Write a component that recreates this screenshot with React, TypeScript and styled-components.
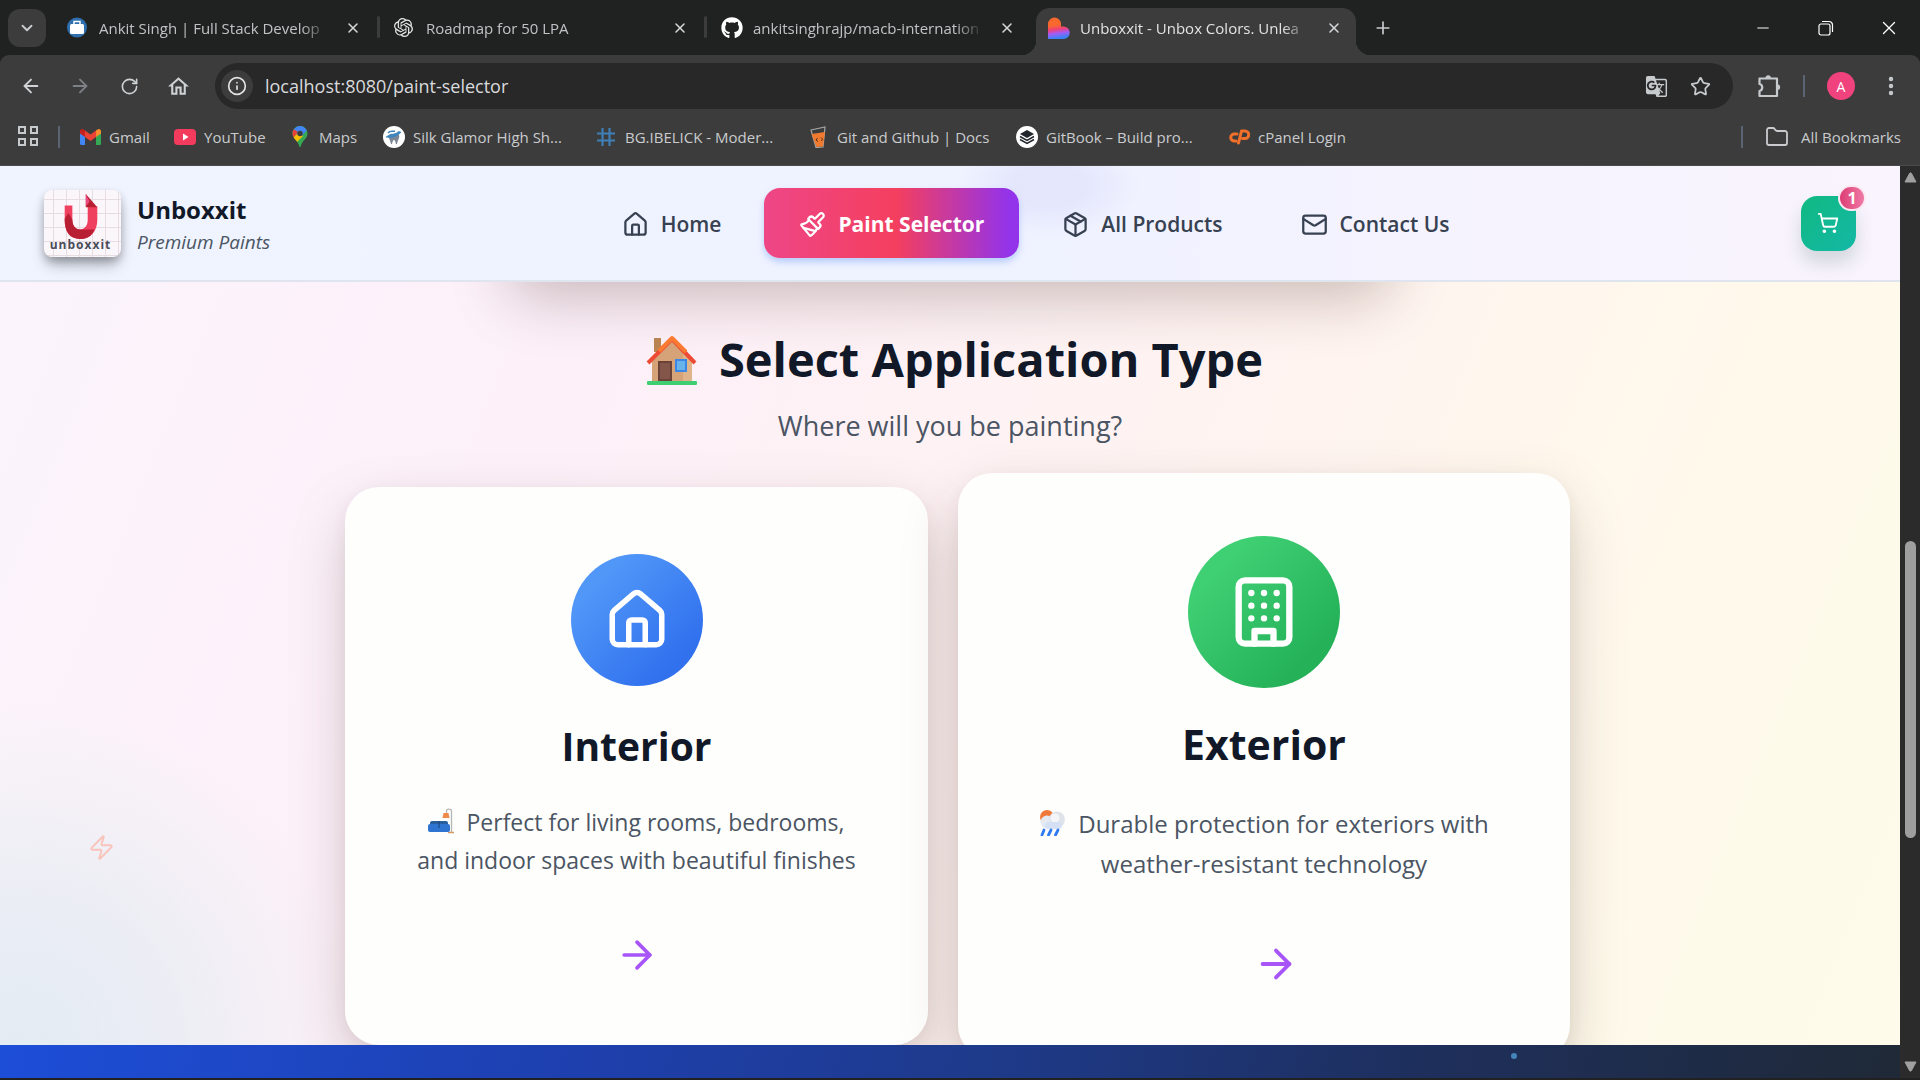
import React from "react";
import styled, { createGlobalStyle, css } from "styled-components";
import {
  ArrowLeft, ArrowRight, RotateCw, Info, X, Plus, Minus, ChevronDown, Star, Folder,
  House, Paintbrush, Package, Mail, ShoppingCart, Zap, EllipsisVertical,
} from "lucide-react";
import { FaGithub } from "react-icons/fa";
import { SiOpenai } from "react-icons/si";
import { MdGTranslate, MdOutlineHome } from "react-icons/md";

const Global = createGlobalStyle`
  * { box-sizing: border-box; }
  html, body, #root { height: 100%; }
  body { margin: 0; background: #202221; font-family: "Open Sans", "Noto Sans", sans-serif; overflow: hidden; }
  button { font: inherit; color: inherit; background: none; border: 0; padding: 0; cursor: pointer; }
  a { color: inherit; text-decoration: none; }
  h1, h2, p { margin: 0; }
  svg { flex: none; display: block; }
`;

const Browser = styled.div`
  height: 100vh;
  display: flex;
  flex-direction: column;
  padding-bottom: 2px;
  background: #222121;
`;

/* ---------- tab strip ---------- */
const TabStrip = styled.div`
  flex: none;
  height: 55px;
  display: flex;
  align-items: flex-end;
  padding-left: 8px;
  background: #202221;
  color: #c9cccf;
`;
const TabSearch = styled.button`
  width: 38px;
  height: 38px;
  margin: 0 9px 8px 0;
  border-radius: 12px;
  background: #3c3c3c;
  display: grid;
  place-items: center;
`;
const Tab = styled.div<{ $active?: boolean }>`
  position: relative;
  width: 320px;
  height: 47px;
  margin-right: 7px;
  padding: 0 14px 8px 12px;
  display: flex;
  align-items: center;
  gap: 10px;
  font-size: 15px;
  color: ${(p) => (p.$active ? "#e3e3e3" : "#c0c3c6")};
  ${(p) =>
    p.$active
      ? css`
          background: #3c3c3c;
          border-radius: 14px 14px 0 0;
          &::before, &::after {
            content: "";
            position: absolute;
            bottom: 0;
            width: 14px;
            height: 14px;
          }
          &::before { left: -14px; background: radial-gradient(circle at 0 0, transparent 14px, #3c3c3c 14px); }
          &::after { right: -14px; background: radial-gradient(circle at 100% 0, transparent 14px, #3c3c3c 14px); }
        `
      : ""}
`;
const TabSlot = styled.span`
  width: 22px;
  display: grid;
  place-items: center start;
  flex: none;
`;
const TabLabel = styled.span`
  flex: 1;
  min-width: 0;
  margin-right: 6px;
  overflow: hidden;
  white-space: nowrap;
  mask-image: linear-gradient(90deg, #000 88%, transparent);
`;
const TabClose = styled.button`
  width: 16px;
  height: 16px;
  display: grid;
  place-items: center;
  color: #d4d6d8;
`;
const TabDivider = styled.i`
  position: absolute;
  right: -5px;
  top: 8px;
  width: 3px;
  height: 22px;
  border-radius: 2px;
  background: #3c3c3c;
`;
const NewTab = styled.button`
  width: 38px;
  height: 38px;
  margin: 0 0 8px 1px;
  display: grid;
  place-items: center;
`;
const WindowControls = styled.div`
  margin-left: auto;
  height: 54px;
  display: flex;
  color: #fff;
  button { width: 63px; display: grid; place-items: center; }
`;

/* ---------- toolbar ---------- */
const Toolbar = styled.div`
  flex: none;
  height: 54px;
  padding: 8px 17px 0 19px;
  display: flex;
  align-items: center;
  border-radius: 9px 9px 0 0;
  background: #3c3c3c;
  color: #c7cacd;
`;
const ToolButton = styled.button<{ $dim?: boolean }>`
  width: 24px;
  height: 24px;
  margin-right: 25px;
  display: grid;
  place-items: center;
  color: ${(p) => (p.$dim ? "#7d8085" : "#d0d3d6")};
`;
const Omnibox = styled.div`
  flex: 1;
  height: 46px;
  padding: 0 22px 0 6px;
  border-radius: 23px;
  display: flex;
  align-items: center;
  gap: 22px;
  background: #282828;
`;
const SiteInfo = styled.button`
  width: 32px;
  height: 32px;
  border-radius: 50%;
  background: #3c3c3c;
  color: #e3e3e3;
  display: grid;
  place-items: center;
`;
const Url = styled.input`
  flex: 1;
  min-width: 0;
  margin-left: -10px;
  padding: 0;
  border: 0;
  outline: 0;
  background: none;
  color: #d8dadd;
  font: 18px "Open Sans", "Noto Sans", sans-serif;
`;
const ToolbarEnd = styled.div`
  display: flex;
  align-items: center;
  padding-left: 24px;
`;
const Divider = styled.i<{ $gap: number }>`
  width: 2px;
  height: 22px;
  margin: 0 ${(p) => p.$gap}px;
  background: #5a6472;
`;
const Avatar = styled.button`
  width: 28px;
  height: 28px;
  margin-right: 24px;
  border-radius: 50%;
  background: #f0427c;
  color: #fff;
  font-size: 14px;
`;

/* ---------- bookmarks ---------- */
const Bookmarks = styled.nav`
  flex: none;
  height: 57px;
  padding: 0 19px 1px 18px;
  display: flex;
  align-items: center;
  background: #3c3c3c;
  border-bottom: 1px solid #4a4a4a;
  color: #c9cbce;
  font-size: 15px;
`;
const Bookmark = styled.a<{ $width: number }>`
  width: ${(p) => p.$width}px;
  flex: none;
  display: flex;
  align-items: center;
  gap: 8px;
  white-space: nowrap;
`;
const BookmarkIcon = styled.span`
  width: 22px;
  height: 22px;
  display: grid;
  place-items: center;
`;
const AllBookmarks = styled.button`
  display: flex;
  align-items: center;
  gap: 12px;
  white-space: nowrap;
`;
const Spacer = styled.span`flex: 1;`;

/* ---------- page viewport ---------- */
const Viewport = styled.div`
  flex: 1;
  min-height: 0;
  display: flex;
`;
const Page = styled.div`
  flex: 1;
  min-width: 0;
  display: flex;
  flex-direction: column;
  overflow: hidden;
`;
const Scrollbar = styled.div`
  width: 20px;
  flex: none;
  display: flex;
  flex-direction: column;
  align-items: center;
  padding: 6px 0;
  background: #2b2b2b;
`;
const Track = styled.div`
  flex: 1;
  display: grid;
  grid-template-rows: 358fr 298fr 223fr;
`;
const Thumb = styled.i`
  grid-row: 2;
  width: 11px;
  border-radius: 6px;
  background: #9f9f9f;
`;

const Header = styled.header`
  flex: none;
  z-index: 2;
  height: 116px;
  padding: 0 44px;
  display: flex;
  justify-content: space-between;
  align-items: center;
  border-bottom: 2px solid #dfe5ee;
  background:
    radial-gradient(ellipse 90px 50px at 1050px 20px, rgba(224, 226, 252, 0.7) 40%, transparent 100%),
    linear-gradient(90deg, #eff4ff 0%, #eff2ff 55%, #f6f3fe 80%, #f9f4fd 100%);
`;
const Brand = styled.a`
  display: flex;
  align-items: center;
  gap: 16px;
`;
const Logo = styled.span`
  width: 77px;
  height: 67px;
  padding: 2px 4px 0 0;
  border-radius: 8px;
  overflow: hidden;
  background-color: #fbf6fa;
  background-image: linear-gradient(#e6dce2 1px, transparent 1px), linear-gradient(90deg, #e6dce2 1px, transparent 1px);
  background-size: 13px 14px;
  background-position: 9px 9px;
  display: flex;
  flex-direction: column;
  align-items: center;
  box-shadow: 0 10px 15px -3px rgba(0, 0, 0, 0.3), 0 4px 8px rgba(0, 0, 0, 0.2);
`;
const LogoText = styled.span`
  margin-top: -1px;
  font-size: 12px;
  line-height: 14px;
  font-weight: 700;
  letter-spacing: 1px;
  color: #4a4c58;
`;
const BrandText = styled.span`
  display: flex;
  flex-direction: column;
  padding-top: 6px;
  strong { font-size: 24px; line-height: 32px; color: #111827; }
  em { font-size: 19px; line-height: 32px; color: #4b5563; }
`;
const Nav = styled.nav`
  display: flex;
  align-items: center;
  gap: 8px;
`;
const NavLink = styled.a<{ $active?: boolean }>`
  height: 70px;
  padding: 2px 35px 0;
  display: flex;
  align-items: center;
  gap: 12px;
  border-radius: 16px;
  font-size: 21px;
  font-weight: ${(p) => (p.$active ? 700 : 600)};
  white-space: nowrap;
  color: ${(p) => (p.$active ? "#fff" : "#374151")};
  ${(p) =>
    p.$active
      ? css`
          background: linear-gradient(90deg, #ee4687 0%, #f43f5e 52%, #9333ea 96%);
          box-shadow: 0 4px 6px rgba(147, 180, 250, 0.6);
        `
      : ""}
`;
const CartButton = styled.button`
  position: relative;
  width: 55px;
  height: 55px;
  border-radius: 16px;
  display: grid;
  place-items: center;
  color: #fff;
  background: linear-gradient(135deg, #10b981, #14b8a6);
  box-shadow: 0 12px 18px rgba(60, 100, 90, 0.2);
`;
const CartCount = styled.span`
  position: absolute;
  top: -11px;
  right: -10px;
  width: 28px;
  height: 26px;
  border: 2px solid #fbe9f1;
  border-radius: 13px;
  background: linear-gradient(90deg, #dc3d73, #f07aa6);
  font-size: 16px;
  line-height: 22px;
  font-weight: 700;
`;

const Content = styled.main`
  flex: 1;
  min-height: 0;
  overflow: hidden;
  position: relative;
  display: flex;
  flex-direction: column;
  align-items: center;
  background:
    radial-gradient(circle 340px at 20px 100%, rgba(214, 232, 240, 0.65) 0%, rgba(222, 234, 240, 0.55) 45%, rgba(236, 240, 242, 0.35) 80%, transparent 100%),
    linear-gradient(112deg, #fbf4fc 0%, #fdf0f9 26%, #fef2f4 46%, #fff4f0 62%, #fff8ec 76%, #fefaea 90%, #fefbea 100%);
`;
const PreviousPanel = styled.div`
  flex: none;
  width: 900px;
  height: 120px;
  margin-top: -124px;
  border-radius: 32px;
  box-shadow: 0 28px 60px -10px rgba(60, 35, 25, 0.28);
`;
const SectionTitle = styled.h1`
  margin: 48px 0 0 9px;
  display: flex;
  align-items: center;
  gap: 22px;
  font-size: 47px;
  line-height: 66px;
  font-weight: 700;
  color: #111827;
`;
const SectionLead = styled.p`
  margin-top: 15px;
  font-size: 27px;
  line-height: 38px;
  color: #4b5563;
`;
const Cards = styled.div`
  margin-top: 28px;
  margin-left: 15px;
  display: flex;
  align-items: center;
  gap: 30px;
`;
const Card = styled.button<{ $large?: boolean }>`
  flex: none;
  width: ${(p) => (p.$large ? 612 : 583)}px;
  height: ${(p) => (p.$large ? 586 : 558)}px;
  padding-top: ${(p) => (p.$large ? 63 : 67)}px;
  border-radius: 34px;
  background: #fefefd;
  box-shadow: 0 24px 60px -6px rgba(70, 45, 35, 0.26), 0 4px 16px rgba(70, 45, 35, 0.05);
  display: flex;
  flex-direction: column;
  align-items: center;
`;
const Disc = styled.span<{ $large?: boolean; $from: string; $to: string }>`
  width: ${(p) => (p.$large ? 152 : 132)}px;
  height: ${(p) => (p.$large ? 152 : 132)}px;
  border-radius: 50%;
  display: grid;
  place-items: center;
  color: #fff;
  background: linear-gradient(135deg, ${(p) => p.$from} 20%, ${(p) => p.$to} 80%);
`;
const CardTitle = styled.strong<{ $large?: boolean }>`
  margin-top: ${(p) => (p.$large ? 26 : 30)}px;
  font-size: ${(p) => (p.$large ? 41 : 39)}px;
  line-height: 60px;
  color: #111827;
`;
const CardText = styled.span<{ $large?: boolean }>`
  margin-top: ${(p) => (p.$large ? 30 : 27)}px;
  font-size: ${(p) => (p.$large ? 24 : 23)}px;
  line-height: ${(p) => (p.$large ? 40 : 38)}px;
  color: #4b5563;
  white-space: nowrap;
  svg { display: inline-block; margin-right: 12px; vertical-align: -3px; }
`;
const CardArrow = styled.span<{ $large?: boolean }>`
  margin-top: ${(p) => (p.$large ? 57 : 54)}px;
  padding-left: ${(p) => (p.$large ? 24 : 0)}px;
  color: #a855f7;
`;
const Spark = styled.span`
  position: absolute;
  left: 88px;
  top: 552px;
  color: #f8c4bb;
`;
const Footer = styled.footer`
  flex: none;
  z-index: 1;
  height: 33px;
  padding: 8px 383px 0 0;
  display: flex;
  justify-content: flex-end;
  background: linear-gradient(100deg, #1d4ed8 0%, #1e40af 30%, #1e3a8a 52%, #1e2f5c 75%, #1f2937 100%);
`;
const FooterDot = styled.i`
  width: 6px;
  height: 6px;
  border-radius: 50%;
  background: #4285b8;
`;

/* ---------- drawings ---------- */
const BagIcon = () => (
  <svg width="20" height="21" viewBox="0 0 20 21">
    <circle cx="10" cy="10.500" r="10" fill="#2f6fae" />
    <rect x="3" y="7" width="14" height="10" rx="1.500" fill="#fff" />
    <path d="M7 7V4.500h6V7" fill="none" stroke="#fff" strokeWidth="1.500" />
  </svg>
);
const HeartIcon = () => (
  <svg width="22" height="22" viewBox="0 0 22 22">
    <defs>
      <linearGradient id="heart" x1="0" y1="0" x2="0.150" y2="1">
        <stop offset="0.400" stopColor="#f9692d" />
        <stop offset="0.600" stopColor="#ee3f7c" />
        <stop offset="0.780" stopColor="#a45cf5" />
        <stop offset="1" stopColor="#3b82f6" />
      </linearGradient>
    </defs>
    <path d="M0 22V7a6.500 6.500 0 0 1 13 0v2.500h2.500a6.200 6.200 0 0 1 0 12.500z" fill="url(#heart)" />
  </svg>
);
const RestoreIcon = () => (
  <svg width="16" height="16" viewBox="0 0 16 16" fill="none" stroke="#fff" strokeWidth="1.200">
    <rect x="1" y="4" width="11" height="11" rx="2" />
    <path d="M4 1.500h7A3.500 3.500 0 0 1 14.500 5v7" />
  </svg>
);
const PuzzleIcon = () => (
  <svg width="24" height="24" viewBox="0 0 24 24">
    <path d="M2.500 4.500H20V22H2.500v-5a3.600 3.600 0 0 0 0-7z" fill="none" stroke="#c7cacd" strokeWidth="2.200" strokeLinejoin="round" />
    <path d="M8.500 4a2.700 2.700 0 0 1 5.400 0zM20.500 10.500a2.700 2.700 0 0 1 0 5.400z" fill="#c7cacd" />
  </svg>
);
const GridIcon = () => (
  <svg width="21" height="21" viewBox="0 0 21 21" fill="none" stroke="#c7cacd" strokeWidth="2">
    <rect x="1" y="1" width="6" height="6" /><rect x="13" y="1" width="6" height="6" />
    <rect x="1" y="13" width="6" height="6" /><rect x="13" y="13" width="6" height="6" />
  </svg>
);
const GmailIcon = () => (
  <svg width="21" height="16" viewBox="0 0 21 16">
    <path d="M0 3v11.500A1.500 1.500 0 0 0 1.500 16H5V7z" fill="#4285f4" />
    <path d="M21 3v11.500a1.500 1.500 0 0 1-1.500 1.500H16V7z" fill="#34a853" />
    <path d="M5 1.500V8l5.500 4L16 8V1.500l-5.500 4z" fill="#ea4335" />
    <path d="M0 2.500v2L5 8V1.500L3.500.5A2.200 2.200 0 0 0 0 2.500z" fill="#c5221f" />
    <path d="M21 2.500v2L16 8V1.500l1.500-1A2.200 2.200 0 0 1 21 2.500z" fill="#fb8c2c" />
  </svg>
);
const YouTubeIcon = () => (
  <svg width="22" height="16" viewBox="0 0 22 16">
    <rect width="22" height="16" rx="4" fill="#f23b5d" /><path d="M9 4.500v7l5.500-3.500z" fill="#fff" />
  </svg>
);
const MapsIcon = () => (
  <svg width="16" height="21" viewBox="0 0 16 21">
    <defs><clipPath id="pin"><path d="M8 0a7.500 7.500 0 0 1 7.500 7.500C15.500 13 10 14 8.500 21h-1C6 14 .5 13 .5 7.500A7.500 7.500 0 0 1 8 0z" /></clipPath></defs>
    <g clipPath="url(#pin)">
      <rect width="16" height="21" fill="#34a853" />
      <path d="M0 0h16v3L8 12 0 6z" fill="#4285f4" />
      <path d="M0 2l6 4-6 8z" fill="#ea4335" />
      <path d="M0 13L6 7l5 3-8 8z" fill="#fbbc04" />
      <circle cx="8" cy="7.500" r="2.700" fill="#3c3c3c" />
    </g>
  </svg>
);
const ToothIcon = () => (
  <svg width="22" height="22" viewBox="0 0 22 22">
    <circle cx="11" cy="11" r="11" fill="#fff" />
    <path d="M6 9c2-2 3-1 5-1s3-1 5 1c1 3-1 4-2 9-2 1-1-4-3-4s-1 5-3 4C7 13 5 12 6 9z" fill="#7d8795" />
    <path d="M2.500 11c3 2 11 1 16-5l-3-1c-2 3-8 2-13 6z" fill="#3f86bd" />
    <path d="M5 7c2-3 5-1 7-2" fill="none" stroke="#3f86bd" strokeWidth="1.500" />
  </svg>
);
const HashIcon = () => (
  <svg width="18" height="18" viewBox="0 0 18 18" stroke="#3f7fb5" strokeWidth="2.200">
    <path d="M5.500 0v18M12.500 0v18M0 5.500h18M0 12.500h18" />
  </svg>
);
const GlassIcon = () => (
  <svg width="17" height="22" viewBox="0 0 17 22">
    <path d="M1 4l14-3-2 20-7 .5z" fill="none" stroke="#a8a8a8" strokeWidth="1.200" />
    <path d="M1.500 8l13.500-2-2 14.500-6.500.5z" fill="#f07a2f" />
    <path d="M7.500 12L6 14l2 1.500M11 11.500l1.500 1.500-1 2" fill="none" stroke="#5a3018" />
  </svg>
);
const StackIcon = () => (
  <svg width="22" height="22" viewBox="0 0 22 22">
    <circle cx="11" cy="11" r="11" fill="#fff" />
    <path d="M11 4l7 4-7 4-7-4z" fill="#22262c" />
    <path d="M4 10.500l7 4 7-4M4 13.500l7 4 7-4" fill="none" stroke="#22262c" strokeWidth="1.500" />
  </svg>
);
const PanelIcon = () => (
  <svg width="22" height="16" viewBox="0 0 22 16" fill="none" stroke="#f2702b" strokeWidth="3" strokeLinecap="round" strokeLinejoin="round">
    <path d="M9 5H6.500a3.500 3.500 0 0 0-.5 7H8" />
    <path d="M10.500 14L13.500 2H17a3.500 3.500 0 0 1 0 7.500h-2.500" />
  </svg>
);
const LogoMark = () => (
  <svg width="36" height="47" viewBox="0 0 36 49">
    <path d="M1 14h8v15c0 6 3 10 8 10s8-4 8-10V15h10v14c0 12-7 20-18 20S1 41 1 29z" fill="#f0405f" />
    <path d="M1 28l4-6 4 7c0 6 3 10 8 10h15C29 46 25 49 17 49 6 49 1 41 1 29z" fill="#b91f33" />
    <path d="M23 2l12 14H23z" fill="#b91f33" />
    <path d="M23 2l4 8-4 5z" fill="#ec4880" />
  </svg>
);
const BuildingIcon = () => (
  <svg width="76" height="76" viewBox="0 0 24 24" fill="none" stroke="currentColor" strokeWidth="2" strokeLinecap="round" strokeLinejoin="round">
    <rect x="4" y="2" width="16" height="20" rx="2" />
    <path d="M9 22v-4h6v4" />
    <path d="M8 6h.01M12 6h.01M16 6h.01M8 10h.01M12 10h.01M16 10h.01M8 14h.01M12 14h.01M16 14h.01" />
  </svg>
);
const HouseEmoji = () => (
  <svg width="51" height="54" viewBox="0 -4 51 54">
    <path d="M8 2h7v14H8z" fill="#b98352" />
    <path d="M6 22L26 4l20 19v22H6z" fill="#d5a377" />
    <path d="M37 16l9 8v21h-9z" fill="#e0b48a" />
    <rect x="12" y="25" width="14" height="20" fill="#6b4238" />
    <rect x="14" y="27" width="10" height="16" fill="#84564a" />
    <rect x="30" y="24" width="10" height="11" fill="#67b3ea" stroke="#3b87e8" strokeWidth="2" />
    <path d="M2 27L26 3l23 24" fill="none" stroke="#ee4b36" strokeWidth="4" strokeLinejoin="round" />
    <path d="M13 15L26 2l14 14" fill="none" stroke="#f97a30" strokeWidth="4" strokeLinejoin="round" />
    <rect x="1" y="45" width="50" height="4" rx="1" fill="#3fcf72" />
  </svg>
);
const SofaEmoji = () => (
  <svg width="26" height="26" viewBox="0 0 26 26">
    <path d="M23.500 24V3c0-2.500-5-2.500-5 0v2" fill="none" stroke="#b5b5b5" strokeWidth="1.300" />
    <path d="M15.500 5h5l1 5h-7z" fill="#f08a4b" />
    <path d="M20 24.500h6" stroke="#d49a66" strokeWidth="1.500" />
    <rect x="2" y="13" width="18" height="7" rx="2" fill="#2a5f9e" />
    <rect x="0" y="16" width="22" height="8" rx="2" fill="#2f74d0" />
    <path d="M11 13v7" stroke="#1d4377" />
  </svg>
);
const RainEmoji = () => (
  <svg width="27" height="26" viewBox="0 0 27 26">
    <circle cx="8" cy="7" r="7" fill="#f0793a" />
    <circle cx="8" cy="12" r="6.500" fill="#e5e9f2" />
    <circle cx="18" cy="9.500" r="8" fill="#dfe3ea" />
    <circle cx="16" cy="8" r="4.500" fill="#f4f5f8" />
    <rect x="6" y="12" width="17" height="7" rx="3.500" fill="#d5e0f5" />
    <path d="M5 20l-2 5M12 20l-2.500 5M19 20l-2.500 5" stroke="#2f7af0" strokeWidth="2.800" strokeLinecap="round" />
  </svg>
);
const ScrollArrow = ({ down }: { down?: boolean }) => (
  <svg width="13" height="11" viewBox="0 0 13 11">
    <path d={down ? "M1 1h11L7.500 9.500q-1 1.500-2 0z" : "M1 10h11L7.500 1.500q-1-1.500-2 0z"} fill="#a0a0a0" stroke="#a0a0a0" strokeLinejoin="round" />
  </svg>
);

const tabs = [
  { label: "Ankit Singh | Full Stack Develop", icon: <BagIcon />, divider: true },
  { label: "Roadmap for 50 LPA", icon: <SiOpenai size={19} color="#e8e8e8" />, divider: true },
  { label: "ankitsinghrajp/macb-internation", icon: <FaGithub size={22} color="#fff" /> },
  { label: "Unboxxit - Unbox Colors. Unlea", icon: <HeartIcon />, active: true },
];

const bookmarks = [
  { label: "Gmail", width: 95, icon: <GmailIcon /> },
  { label: "YouTube", width: 115, icon: <YouTubeIcon /> },
  { label: "Maps", width: 94, icon: <MapsIcon /> },
  { label: "Silk Glamor High Sh...", width: 212, icon: <ToothIcon /> },
  { label: "BG.IBELICK - Moder...", width: 212, icon: <HashIcon /> },
  { label: "Git and Github | Docs", width: 209, icon: <GlassIcon /> },
  { label: "GitBook – Build pro...", width: 212, icon: <StackIcon /> },
  { label: "cPanel Login", width: 130, icon: <PanelIcon /> },
];

const links = [
  { label: "Home", Icon: House },
  { label: "Paint Selector", Icon: Paintbrush, active: true },
  { label: "All Products", Icon: Package },
  { label: "Contact Us", Icon: Mail },
];

export default function App() {
  return (
    <Browser>
      <Global />
      <TabStrip>
        <TabSearch aria-label="Search tabs"><ChevronDown size={18} strokeWidth={2.5} /></TabSearch>
        {tabs.map((t) => (
          <Tab key={t.label} $active={t.active}>
            <TabSlot>{t.icon}</TabSlot>
            <TabLabel>{t.label}</TabLabel>
            <TabClose aria-label="Close tab"><X size={16} strokeWidth={2.3} /></TabClose>
            {t.divider && <TabDivider />}
          </Tab>
        ))}
        <NewTab aria-label="New tab"><Plus size={20} /></NewTab>
        <WindowControls>
          <button aria-label="Minimize"><Minus size={18} strokeWidth={1.3} /></button>
          <button aria-label="Restore"><RestoreIcon /></button>
          <button aria-label="Close window"><X size={22} strokeWidth={1.4} /></button>
        </WindowControls>
      </TabStrip>

      <Toolbar>
        <ToolButton aria-label="Back"><ArrowLeft size={22} /></ToolButton>
        <ToolButton aria-label="Forward" $dim><ArrowRight size={22} /></ToolButton>
        <ToolButton aria-label="Reload"><RotateCw size={19} /></ToolButton>
        <ToolButton aria-label="Home page"><MdOutlineHome size={25} /></ToolButton>
        <Omnibox>
          <SiteInfo aria-label="Site information"><Info size={20} /></SiteInfo>
          <Url aria-label="Address" defaultValue="localhost:8080/paint-selector" />
          <button aria-label="Translate"><MdGTranslate size={23} /></button>
          <button aria-label="Bookmark this page"><Star size={21} /></button>
        </Omnibox>
        <ToolbarEnd>
          <button aria-label="Extensions"><PuzzleIcon /></button>
          <Divider $gap={22} />
          <Avatar>A</Avatar>
          <button aria-label="Menu"><EllipsisVertical size={24} strokeWidth={2.4} /></button>
        </ToolbarEnd>
      </Toolbar>

      <Bookmarks>
        <GridIcon />
        <Divider $gap={19} />
        {bookmarks.map((b) => (
          <Bookmark key={b.label} href="#" $width={b.width}>
            <BookmarkIcon>{b.icon}</BookmarkIcon>{b.label}
          </Bookmark>
        ))}
        <Spacer />
        <Divider $gap={22} />
        <AllBookmarks><Folder size={24} strokeWidth={1.8} />All Bookmarks</AllBookmarks>
      </Bookmarks>

      <Viewport>
        <Page>
          <Header>
            <Brand href="#">
              <Logo><LogoMark /><LogoText>unboxxit</LogoText></Logo>
              <BrandText><strong>Unboxxit</strong><em>Premium Paints</em></BrandText>
            </Brand>
            <Nav>
              {links.map(({ label, Icon, active }) => (
                <NavLink key={label} href="#" $active={active}><Icon size={27} />{label}</NavLink>
              ))}
            </Nav>
            <CartButton aria-label="Cart"><ShoppingCart size={22} /><CartCount>1</CartCount></CartButton>
          </Header>

          <Content>
            <PreviousPanel />
            <SectionTitle><HouseEmoji />Select Application Type</SectionTitle>
            <SectionLead>Where will you be painting?</SectionLead>
            <Cards>
              <Card>
                <Disc $from="#5197f8" $to="#3171ee"><House size={66} /></Disc>
                <CardTitle>Interior</CardTitle>
                <CardText><SofaEmoji />Perfect for living rooms, bedrooms,<br />and indoor spaces with beautiful finishes</CardText>
                <CardArrow><ArrowRight size={44} /></CardArrow>
              </Card>
              <Card $large>
                <Disc $large $from="#40d074" $to="#24b158"><BuildingIcon /></Disc>
                <CardTitle $large>Exterior</CardTitle>
                <CardText $large><RainEmoji />Durable protection for exteriors with<br />weather-resistant technology</CardText>
                <CardArrow $large><ArrowRight size={46} /></CardArrow>
              </Card>
            </Cards>
            <Spark><Zap size={27} strokeWidth={1.8} /></Spark>
          </Content>
          <Footer><FooterDot /></Footer>
        </Page>
        <Scrollbar>
          <ScrollArrow />
          <Track><Thumb /></Track>
          <ScrollArrow down />
        </Scrollbar>
      </Viewport>
    </Browser>
  );
}
